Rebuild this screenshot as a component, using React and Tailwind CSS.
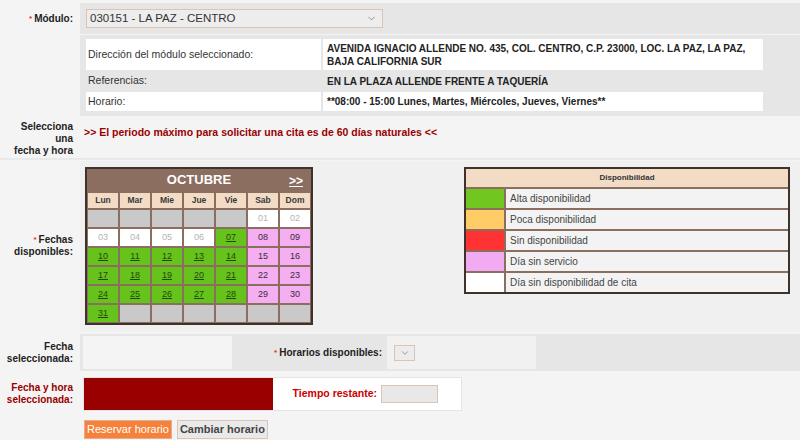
import { ChevronDown } from "lucide-react";

const dayNames = ["Lun", "Mar", "Mie", "Jue", "Vie", "Sab", "Dom"];

// estado de cada día de octubre: off = sin cita, alta = disponible, sin = sin servicio
const diaTipo = (n) => {
  if (n <= 6) return "off";
  const col = (n + 4) % 7; // 1 de octubre cae en sábado
  if (col >= 5) return "sin";
  return "alta";
};

const buildWeeks = () => {
  const cells = [null, null, null, null, null];
  for (let n = 1; n <= 31; n++) cells.push(n);
  while (cells.length % 7) cells.push(null);
  const weeks = [];
  for (let i = 0; i < cells.length; i += 7) weeks.push(cells.slice(i, i + 7));
  return weeks;
};

const cellStyle = {
  off: "bg-white text-[#b3b3b3]",
  alta: "bg-[#66c31b] text-[#24480c] underline",
  sin: "bg-[#f4aef1] text-[#3b2b3b]",
};

const leyenda = [
  { color: "bg-[#72c620]", text: "Alta disponibilidad" },
  { color: "bg-[#ffcc66]", text: "Poca disponibilidad" },
  { color: "bg-[#ff3333]", text: "Sin disponibilidad" },
  { color: "bg-[#f2aaf1]", text: "Día sin servicio" },
  { color: "bg-white", text: "Día sin disponibilidad de cita" },
];

function Label({ children, red }) {
  return (
    <div
      className={`w-[78px] shrink-0 pr-[5px] text-right text-[10px] font-bold leading-[12px] flex items-center justify-end ${
        red ? "text-[#990000]" : "text-[#222]"
      }`}
    >
      <div>{children}</div>
    </div>
  );
}

function Req() {
  return <span className="text-[#e03030] text-[8px] mr-[2px] align-top">*</span>;
}

function Calendario() {
  const weeks = buildWeeks();
  return (
    <div className="w-[228px] border-2 border-[#3f322b] bg-[#8b6e60]">
      <div className="h-[22px] flex items-center relative">
        <div className="flex-1 text-center text-white font-bold text-[13px]">OCTUBRE</div>
        <span className="absolute right-[8px] top-[3px] text-white font-bold text-[12px] underline">
          &gt;&gt;
        </span>
      </div>
      <div className="grid grid-cols-7 gap-[2px] px-[1px] pt-[2px] pb-[1px]">
        {dayNames.map((d) => (
          <div
            key={d}
            className="h-[15px] bg-[#f3dcc6] text-[#3a3a3a] text-[8.5px] font-bold flex items-center justify-center"
          >
            {d}
          </div>
        ))}
        {weeks.flat().map((n, i) =>
          n === null ? (
            <div key={i} className="h-[17px] bg-[#c9c9c9]" />
          ) : (
            <div
              key={i}
              className={`h-[17px] text-[9px] flex items-center justify-center ${cellStyle[diaTipo(n)]}`}
            >
              {String(n).padStart(2, "0")}
            </div>
          )
        )}
      </div>
    </div>
  );
}

function Leyenda() {
  return (
    <div className="w-[326px] border-2 border-[#3f322b] bg-[#8b6e60] flex flex-col gap-[2px]">
      <div className="h-[18px] bg-[#f3dcc6] text-[#333] text-[8px] font-bold flex items-center justify-center">
        Disponibilidad
      </div>
      {leyenda.map((l) => (
        <div key={l.text} className="h-[19px] flex gap-[2px]">
          <div className={`w-[38px] ${l.color}`} />
          <div className="flex-1 bg-[#f3f3f3] text-[#444] text-[10px] pl-[4px] flex items-center">
            {l.text}
          </div>
        </div>
      ))}
    </div>
  );
}

export default function App() {
  return (
    <div
      className="w-[800px] h-[440px] overflow-hidden bg-[#f4f4f4] pt-[3px] flex flex-col"
      style={{ fontFamily: '"Liberation Sans", Arial, sans-serif' }}
    >
      {/* módulo */}
      <div className="flex h-[31px] gap-[2px]">
        <Label>
          <Req />
          Módulo:
        </Label>
        <div className="flex-1 bg-[#e6e6e6] flex items-center pl-[6px]">
          <div className="w-[297px] h-[19px] bg-[#ededed] border border-[#dcc3b2] flex items-center justify-between pl-[3px] pr-[5px] text-[11.5px] text-[#333]">
            <span>030151 - LA PAZ - CENTRO</span>
            <ChevronDown size={11} strokeWidth={1.5} className="text-[#666]" />
          </div>
        </div>
      </div>

      {/* datos del módulo */}
      <div className="flex h-[81px] mt-[1px] gap-[2px]">
        <div className="w-[78px] shrink-0" />
        <div className="flex-1 bg-[#e6e6e6] pt-[4px] pl-[6px] pr-[37px]">
          <div className="flex flex-col gap-[2px] text-[10.5px] text-[#333]">
            <div className="flex gap-[2px] h-[31px]">
              <div className="w-[235px] bg-white pl-[2px] flex items-center">
                Dirección del módulo seleccionado:
              </div>
              <div className="flex-1 bg-white pl-[4px] flex items-center font-bold text-[10px] text-[#222] leading-[13px]">
                AVENIDA IGNACIO ALLENDE NO. 435, COL. CENTRO, C.P. 23000, LOC. LA PAZ, LA PAZ, BAJA
                CALIFORNIA SUR
              </div>
            </div>
            <div className="flex gap-[2px] h-[18px]">
              <div className="w-[235px] pl-[2px] flex items-center">Referencias:</div>
              <div className="flex-1 pl-[4px] flex items-center font-bold text-[10px] text-[#222]">
                EN LA PLAZA ALLENDE FRENTE A TAQUERÍA
              </div>
            </div>
            <div className="flex gap-[2px] h-[19px]">
              <div className="w-[235px] bg-white pl-[2px] flex items-center">Horario:</div>
              <div className="flex-1 bg-white pl-[4px] flex items-center font-bold text-[10px] text-[#222]">
                **08:00 - 15:00 Lunes, Martes, Miércoles, Jueves, Viernes**
              </div>
            </div>
          </div>
        </div>
      </div>

      {/* aviso del periodo */}
      <div className="flex h-[41px] mt-[3px] gap-[2px] border-b-2 border-[#e9e9e9]">
        <Label>
          Selecciona
          <br />
          una
          <br />
          fecha y hora
        </Label>
        <div className="flex-1 pl-[4px] pt-[6px] text-[10.5px] font-bold text-[#990000]">
          &gt;&gt; El periodo máximo para solicitar una cita es de 60 días naturales &lt;&lt;
        </div>
      </div>

      {/* calendario */}
      <div className="flex h-[170px] mt-[1px] gap-[2px]">
        <Label>
          <Req />
          Fechas
          <br />
          disponibles:
        </Label>
        <div className="flex-1 bg-[#f0f0f0] pt-[6px] pl-[5px] pr-[10px] flex items-start justify-between">
          <Calendario />
          <Leyenda />
        </div>
      </div>

      {/* fecha seleccionada */}
      <div className="flex h-[37px] mt-[3px] gap-[2px]">
        <Label>
          Fecha
          <br />
          seleccionada:
        </Label>
        <div className="flex-1 bg-[#e6e6e6] flex items-stretch py-[2px] pl-[3px]">
          <div className="w-[149px] bg-[#f4f4f4]" />
          <div className="w-[153px] flex items-center justify-end pr-[3px] text-[10px] font-bold text-[#222]">
            <Req />
            Horarios disponibles:
          </div>
          <div className="w-[149px] ml-[2px] bg-[#f1f1f1] flex items-center pl-[7px]">
            <div className="w-[21px] h-[16px] bg-[#ececec] border border-[#dcc3b2] flex items-center justify-center">
              <ChevronDown size={10} strokeWidth={1.5} className="text-[#666]" />
            </div>
          </div>
        </div>
      </div>

      {/* fecha y hora seleccionada */}
      <div className="flex h-[39px] mt-[3px] gap-[2px]">
        <Label red>
          Fecha y hora
          <br />
          seleccionada:
        </Label>
        <div className="flex-1 flex items-center pl-[3px]">
          <div className="w-[379px] h-[34px] bg-white border border-[#e4e4e4] flex items-stretch">
            <div className="w-[189px] bg-[#990000]" />
            <div className="flex-1 flex items-center justify-end pr-[23px]">
              <span className="text-[10.5px] font-bold text-[#cc0000] mr-[4px]">
                Tiempo restante:
              </span>
              <div className="w-[57px] h-[18px] bg-[#e8e8e8] border border-[#dcc3b2]" />
            </div>
          </div>
        </div>
      </div>

      {/* botones */}
      <div className="flex mt-[7px] gap-[2px]">
        <div className="w-[78px] shrink-0" />
        <div className="flex-1 flex items-start gap-[5px] pl-[4px]">
          <button className="h-[19px] px-[2px] bg-[#f5813a] border border-[#e2b08c] text-white text-[11px] leading-none">
            Reservar horario
          </button>
          <button className="h-[19px] px-[2px] bg-[#e9e9e9] border border-[#dcc3b2] text-[#444] text-[11px] font-bold leading-none">
            Cambiar horario
          </button>
        </div>
      </div>
    </div>
  );
}
